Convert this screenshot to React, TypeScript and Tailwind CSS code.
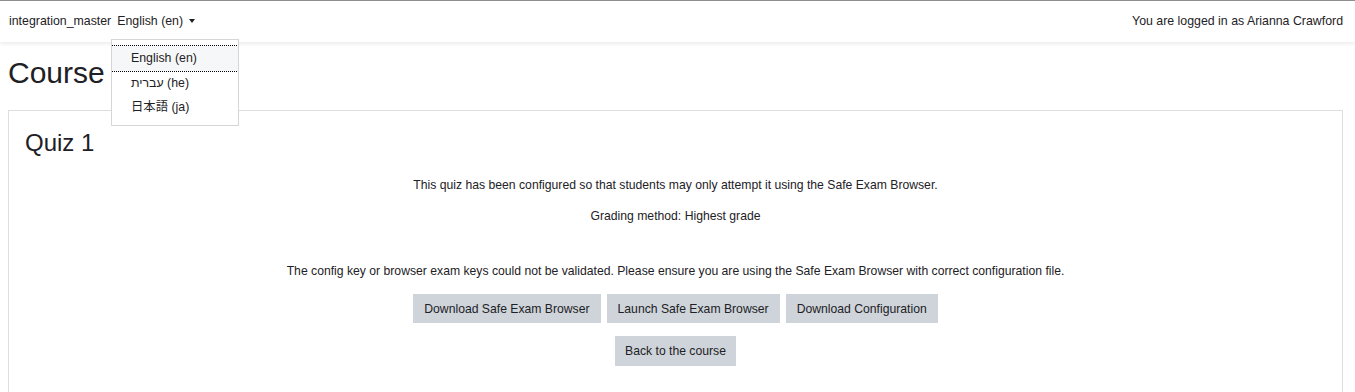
export default function App() {
  return (
    <div className="relative min-h-[392px] bg-white font-['Liberation_Sans',Arial,sans-serif] text-[12.2px] text-[#1d2125]">
      {/* Navbar */}
      <header className="relative z-10 flex h-[42px] items-center justify-between border-t border-[#8e8e8e] bg-white pl-[9px] pr-[12px] text-[12.35px] shadow-[0_2px_4px_rgba(0,0,0,0.08)]">
        <div className="flex items-center">
          <span>integration_master</span>
          <button className="ml-[6px] flex items-center">
            English (en)
            <span className="ml-[6px] inline-block h-0 w-0 border-x-[3px] border-t-[4px] border-x-transparent border-t-[#1d2125]" />
          </button>
        </div>
        <span>You are logged in as Arianna Crawford</span>
      </header>

      {/* Language dropdown */}
      <div className="absolute left-[111px] top-[39px] z-20 w-[128px] overflow-hidden border border-[#d6d6d6] bg-white py-[6px] text-[12.35px]">
        <div className="flex h-[25px] items-center bg-[#f6f7f8] pl-[19px] outline-1 outline-dotted outline-black">
          English (en)
        </div>
        <div className="flex h-[24px] items-center pl-[19px]">עברית (he)</div>
        <div className="flex h-[24px] items-center pl-[19px] font-['Liberation_Sans','Noto_Sans_CJK_JP',sans-serif]">日本語 (ja)</div>
      </div>

      <main className="pl-[8px] pr-[12px]">
        <h1 className="mt-[13px] mb-[19px] text-[30px] leading-[36px]">Course</h1>

        <section className="border border-[#dedede] px-[16px] pt-[17px] pb-[30px]">
          <h2 className="text-[24px] leading-[29px]">Quiz 1</h2>
          <div className="mt-[18px] flex flex-col items-center text-center leading-[20px]">
            <p>This quiz has been configured so that students may only attempt it using the Safe Exam Browser.</p>
            <p className="mt-[11px]">Grading method: Highest grade</p>
            <p className="mt-[35px]">
              The config key or browser exam keys could not be validated. Please ensure you are using the Safe Exam Browser with correct configuration file.
            </p>
            <div className="mt-[13px] flex gap-[6px]">
              <button className="h-[29px] bg-[#ced4da] px-[11px]">Download Safe Exam Browser</button>
              <button className="h-[29px] bg-[#ced4da] px-[11px]">Launch Safe Exam Browser</button>
              <button className="h-[29px] bg-[#ced4da] px-[11px]">Download Configuration</button>
            </div>
            <button className="mt-[13px] h-[30px] bg-[#ced4da] px-[10px]">Back to the course</button>
          </div>
        </section>
      </main>
    </div>
  );
}
